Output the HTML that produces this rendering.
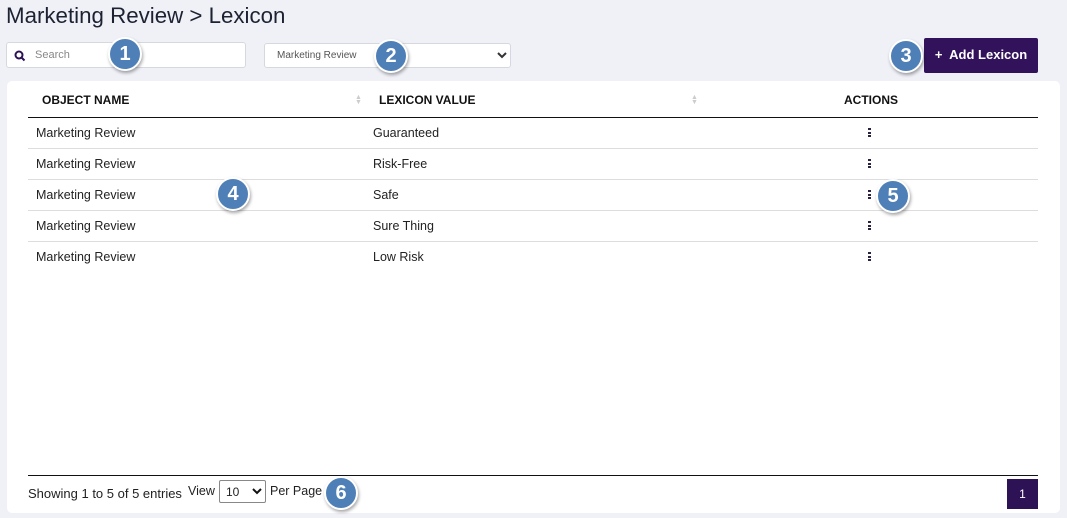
<!DOCTYPE html>
<html><head><style>
*{box-sizing:border-box;margin:0;padding:0}
body{width:1067px;height:518px;background:#f0f1f7;font-family:"Liberation Sans",Arial,sans-serif;position:relative;overflow:hidden;color:#222}
.abs{position:absolute}
h1{position:absolute;left:6px;top:3px;font-size:22.3px;font-weight:400;color:#1d2233}
.input{position:absolute;background:#fff;border:1px solid #d6d8e0;border-radius:3px}
.badge{position:absolute;width:34px;height:34px;border-radius:50%;background:#4f7fb7;border:2px solid #fff;box-shadow:1px 2px 3px rgba(0,0,0,.35);color:#fff;font-weight:700;font-size:20px;text-align:center;line-height:30px}
.card{position:absolute;left:7px;top:81px;width:1053px;height:432px;background:#fff;border-radius:5px}
.th{position:absolute;top:93px;font-size:12px;font-weight:700;color:#111}
.td{position:absolute;font-size:12.5px;color:#222}
.line{position:absolute;left:28px;width:1010px;height:1px;background:#ddd}
.dots{position:absolute;left:868px;width:3px;font-size:0}
.dots i{display:block;width:3px;height:2px;background:#2b2140;margin-bottom:1.5px}
.sort{position:absolute;top:95px;color:#ccc;font-size:7px;line-height:5px}
</style></head><body>
<h1>Marketing Review &gt; Lexicon</h1>
<div class="input" style="left:6px;top:42px;width:240px;height:26px"></div>
<svg class="abs" style="left:14px;top:50px" width="12" height="12" viewBox="0 0 12 12"><circle cx="5" cy="5" r="3.5" fill="none" stroke="#2e1256" stroke-width="2"/><path d="M7.5 7.5L10.5 10.5" stroke="#2e1256" stroke-width="2"/></svg>
<div class="abs" style="left:35px;top:49px;font-size:11px;color:#888">Search</div>
<div class="input" style="left:264px;top:43px;width:247px;height:25px"></div>
<div class="abs" style="left:277px;top:50px;font-size:10px;color:#555">Marketing Review</div>
<svg class="abs" style="left:497px;top:52px" width="10" height="7" viewBox="0 0 10 7"><path d="M1 1l4 4 4-4" fill="none" stroke="#333" stroke-width="2"/></svg>
<div class="abs" style="left:924px;top:38px;width:114px;height:35px;background:#32125a;border-radius:2px;color:#fff;font-weight:700;font-size:13px;line-height:34px;text-align:center">+&nbsp; Add Lexicon</div>
<div class="card"></div>
<div class="th" style="left:42px">OBJECT NAME</div>
<div class="th" style="left:379px">LEXICON VALUE</div>
<div class="th" style="left:844px">ACTIONS</div>
<div class="sort" style="left:355px">▲<br>▼</div>
<div class="sort" style="left:691px">▲<br>▼</div>
<div class="line" style="top:117px;background:#111"></div>
<div class="td" style="left:36px;top:126px">Marketing Review</div><div class="td" style="left:373px;top:126px">Guaranteed</div>
<div class="line" style="top:148px"></div>
<div class="td" style="left:36px;top:157px">Marketing Review</div><div class="td" style="left:373px;top:157px">Risk-Free</div>
<div class="line" style="top:179px"></div>
<div class="td" style="left:36px;top:188px">Marketing Review</div><div class="td" style="left:373px;top:188px">Safe</div>
<div class="line" style="top:210px"></div>
<div class="td" style="left:36px;top:219px">Marketing Review</div><div class="td" style="left:373px;top:219px">Sure Thing</div>
<div class="line" style="top:241px"></div>
<div class="td" style="left:36px;top:250px">Marketing Review</div><div class="td" style="left:373px;top:250px">Low Risk</div>
<div class="dots" style="top:128px"><i></i><i></i><i></i></div>
<div class="dots" style="top:159px"><i></i><i></i><i></i></div>
<div class="dots" style="top:190px"><i></i><i></i><i></i></div>
<div class="dots" style="top:221px"><i></i><i></i><i></i></div>
<div class="dots" style="top:252px"><i></i><i></i><i></i></div>
<div class="line" style="top:475px;background:#111"></div>
<div class="abs" style="left:28px;top:486px;font-size:13px">Showing 1 to 5 of 5 entries</div>
<div class="abs" style="left:188px;top:484px;font-size:12.5px">View</div>
<div class="abs" style="left:219px;top:480px;width:47px;height:23px;border:1px solid #888;border-radius:2px;background:#fff;font-size:12px;padding:4px 0 0 6px">10</div>
<svg class="abs" style="left:252px;top:488px" width="10" height="7" viewBox="0 0 10 7"><path d="M1 1l4 4 4-4" fill="none" stroke="#111" stroke-width="2"/></svg>
<div class="abs" style="left:270px;top:484px;font-size:12.5px">Per Page</div>
<div class="abs" style="left:1007px;top:479px;width:31px;height:30px;background:#2e1256;color:#fff;font-size:12px;text-align:center;line-height:30px">1</div>
<div class="badge" style="left:108px;top:37px">1</div>
<div class="badge" style="left:374px;top:39px">2</div>
<div class="badge" style="left:889px;top:39px">3</div>
<div class="badge" style="left:216px;top:177px">4</div>
<div class="badge" style="left:876px;top:179px">5</div>
<div class="badge" style="left:324px;top:476px">6</div>
</body></html>
